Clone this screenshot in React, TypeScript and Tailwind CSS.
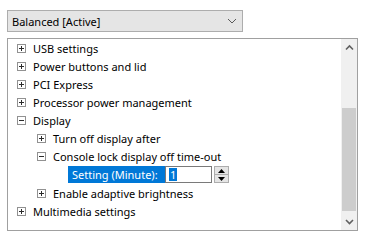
import React from "react"

type Node = {
	label: string
	level: number
	state?: "plus" | "minus"
}

const rows: Node[] = [
	{ label: "USB settings", level: 0, state: "plus" },
	{ label: "Power buttons and lid", level: 0, state: "plus" },
	{ label: "PCI Express", level: 0, state: "plus" },
	{ label: "Processor power management", level: 0, state: "plus" },
	{ label: "Display", level: 0, state: "minus" },
	{ label: "Turn off display after", level: 1, state: "plus" },
	{ label: "Console lock display off time-out", level: 1, state: "minus" },
]

const font = { fontFamily: "'Segoe UI', 'Noto Sans', 'Open Sans', sans-serif" }

function ExpandBox({ state }: { state: "plus" | "minus" }) {
	return (
		<svg width="9" height="9" viewBox="0 0 9 9" className="shrink-0">
			<rect x="0.5" y="0.5" width="8" height="8" fill="#fff" stroke="#919191" />
			<line x1="2" y1="4.5" x2="7" y2="4.5" stroke="#2b2b2b" />
			{state === "plus" && <line x1="4.5" y1="2" x2="4.5" y2="7" stroke="#2b2b2b" />}
		</svg>
	)
}

function TreeRow({ node }: { node: Node }) {
	const indent = node.level === 0 ? "pl-[9px]" : "pl-[29px]"
	return (
		<div className={`flex h-[18px] items-center gap-[7px] ${indent}`}>
			{node.state && <ExpandBox state={node.state} />}
			<span className="text-[11px] leading-none text-black whitespace-nowrap">{node.label}</span>
		</div>
	)
}

function Chevron({ dir }: { dir: "up" | "down" }) {
	const d = dir === "up" ? "M1 5.5 L4.5 2 L8 5.5" : "M1 2 L4.5 5.5 L8 2"
	return (
		<svg width="9" height="8" viewBox="0 0 9 8">
			<path d={d} fill="none" stroke="#606060" strokeWidth="1.6" />
		</svg>
	)
}

export default function App() {
	return (
		<div className="w-[365px] h-[236px] bg-white pl-[7px] pt-[10px]" style={font}>
			<div className="flex h-[22px] w-[236px] items-center justify-between border border-[#adadad] bg-[#e5e5e5] pl-[4px] pr-[5px]">
				<span className="text-[11px] leading-none text-black">Balanced [Active]</span>
				<svg width="10" height="6" viewBox="0 0 10 6">
					<path d="M1 1 L5 5 L9 1" fill="none" stroke="#5a5a5a" strokeWidth="1" />
				</svg>
			</div>

			<div className="mt-[6px] flex h-[193px] w-[351px] border border-[#a0a0a0]">
				<div className="flex-1 overflow-hidden">
					{rows.map((n) => (
						<TreeRow key={n.label} node={n} />
					))}
					<div className="flex h-[19px] items-center pl-[60px]">
						<div className="flex h-[17px] w-[97px] items-center bg-[#0078d7] pl-[4px]">
							<span className="text-[11px] leading-none text-white whitespace-nowrap">Setting (Minute):</span>
						</div>
						<div className="flex h-[17px] w-[47px] items-center border border-[#7a7a7a] bg-white pl-[3px]">
							<span className="bg-[#0078d7] px-[1px] text-[11px] leading-[13px] text-white">1</span>
						</div>
						<div className="ml-[2px] flex h-[17px] w-[15px] flex-col border border-[#adadad] bg-[#e5e5e5]">
							<div className="flex flex-1 items-center justify-center border-b border-[#adadad]">
								<svg width="7" height="4" viewBox="0 0 7 4">
									<path d="M0 4 L3.5 0 L7 4 Z" fill="#000" />
								</svg>
							</div>
							<div className="flex flex-1 items-center justify-center">
								<svg width="7" height="4" viewBox="0 0 7 4">
									<path d="M0 0 L3.5 4 L7 0 Z" fill="#000" />
								</svg>
							</div>
						</div>
					</div>
					<TreeRow node={{ label: "Enable adaptive brightness", level: 1, state: "plus" }} />
					<TreeRow node={{ label: "Multimedia settings", level: 0, state: "plus" }} />
				</div>

				<div className="flex w-[16px] flex-col bg-[#f0f0f0]">
					<div className="flex h-[17px] items-center justify-center">
						<Chevron dir="up" />
					</div>
					<div className="h-[52px]" />
					<div className="mx-[1px] flex-1 bg-[#cdcdcd]" />
					<div className="h-[2px]" />
					<div className="flex h-[17px] items-center justify-center">
						<Chevron dir="down" />
					</div>
				</div>
			</div>
		</div>
	)
}
